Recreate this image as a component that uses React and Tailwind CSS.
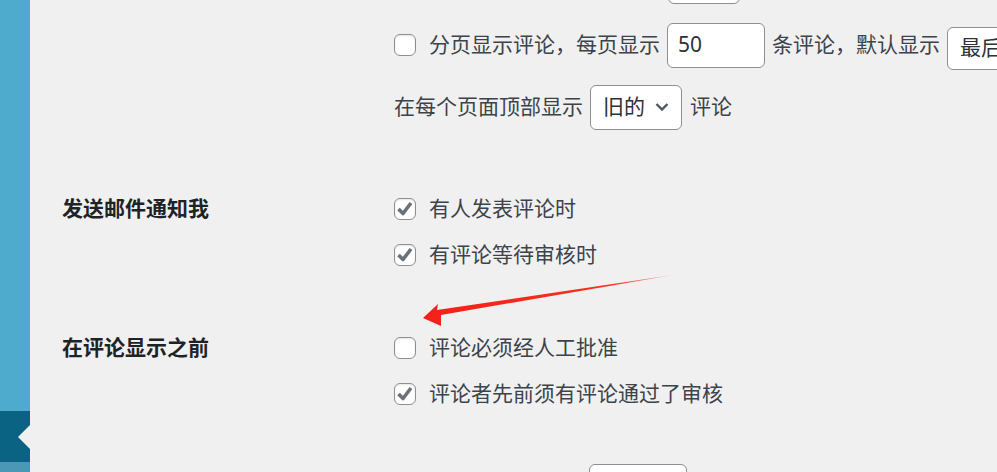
import React from "react";

const font = { fontFamily: '"Noto Sans", "Noto Sans CJK SC", sans-serif' };

const Checkbox = ({ checked }) => (
  <span className="w-[22px] h-[22px] shrink-0 rounded-[6px] border border-[#8c8f94] bg-white flex items-center justify-center shadow-[inset_0_1px_2px_rgba(0,0,0,0.1)]">
    {checked && (
      <svg width="20" height="20" viewBox="0 0 20 20">
        <path d="M3.5 10 L8 14.5 L16 4" fill="none" stroke="#6b7178" strokeWidth="3.6" strokeLinejoin="round" />
      </svg>
    )}
  </span>
);

const Input = ({ value, w }) => (
  <span className={`h-[45px] rounded-[6px] border border-[#8c8f94] bg-white flex items-center px-[10px] text-[#2c3338] ${w}`}>
    {value}
  </span>
);

const CheckRow = ({ checked, label }) => (
  <div className="h-[46px] flex items-center gap-[13px]">
    <Checkbox checked={checked} />
    <span>{label}</span>
  </div>
);

export default function App() {
  return (
    <div className="relative w-[997px] h-[472px] overflow-hidden flex bg-[#f0f0f1] text-[21px] text-[#3c434a]" style={font}>
      {/* admin sidebar edge */}
      <div className="w-[30px] flex flex-col shrink-0">
        <div className="h-[411px] bg-[#4fabce]" />
        <div className="h-[51px] bg-[#0b6384] flex items-center justify-end">
          <span className="w-0 h-0 border-y-[12px] border-y-transparent border-r-[12px] border-r-[#f0f0f1]" />
        </div>
        <div className="flex-1 bg-[#4a97b6]" />
      </div>

      {/* settings table */}
      <div className="flex-1 pl-[32px]">
        <div className="flex">
          <div className="w-[332px] shrink-0" />
          <div className="pl-[274px]">
            <span className="block mt-[-41px] h-[45px] w-[72px] rounded-[6px] border border-[#8c8f94] bg-white" />
          </div>
        </div>

        <div className="flex mt-[10px]">
          <div className="w-[332px] shrink-0" />
          <div className="flex flex-col">
            <div className="h-[62px] flex items-center whitespace-nowrap">
              <Checkbox />
              <span className="ml-[13px]">分页显示评论，每页显示</span>
              <span className="ml-[7px]"><Input value="50" w="w-[98px]" /></span>
              <span className="ml-[7px]">条评论，默认显示</span>
              <span className="ml-[7px] mt-[6px] h-[43px] w-[90px] rounded-[6px] border border-[#8c8f94] bg-white flex items-center px-[12px] text-[#2c3338]">最后</span>
            </div>
            <div className="h-[62px] flex items-center whitespace-nowrap">
              <span>在每个页面顶部显示</span>
              <span className="ml-[7px] h-[45px] w-[92px] rounded-[6px] border border-[#8c8f94] bg-white flex items-center justify-between pl-[12px] pr-[11px] text-[#2c3338]">
                旧的
                <svg width="16" height="16" viewBox="0 0 16 16">
                  <path d="M2.5 5 L8 10.5 L13.5 5" fill="none" stroke="#50575e" strokeWidth="2.4" />
                </svg>
              </span>
              <span className="ml-[8px]">评论</span>
            </div>
          </div>
        </div>

        <div className="flex mt-[48px]">
          <div className="w-[332px] shrink-0 h-[46px] flex items-center font-semibold text-[#1d2327]">发送邮件通知我</div>
          <div className="flex flex-col">
            <CheckRow checked label="有人发表评论时" />
            <CheckRow checked label="有评论等待审核时" />
          </div>
        </div>

        <div className="flex mt-[47px]">
          <div className="w-[332px] shrink-0 h-[46px] flex items-center font-semibold text-[#1d2327]">在评论显示之前</div>
          <div className="flex flex-col">
            <CheckRow label="评论必须经人工批准" />
            <CheckRow checked label="评论者先前须有评论通过了审核" />
          </div>
        </div>

        <div className="flex mt-[47px]">
          <div className="w-[332px] shrink-0" />
          <span className="ml-[195px] h-[45px] w-[98px] rounded-[6px] border border-[#8c8f94] bg-white" />
        </div>
      </div>

      {/* annotation arrow */}
      <svg className="absolute left-0 top-0 pointer-events-none" width="997" height="472">
        <defs>
          <linearGradient id="ar" x1="423" y1="318" x2="673" y2="275" gradientUnits="userSpaceOnUse">
            <stop offset="0" stopColor="#f51f1a" />
            <stop offset="0.75" stopColor="#f5321f" />
            <stop offset="1" stopColor="#f7a0a0" />
          </linearGradient>
        </defs>
        <polygon points="423,318 438,304 437,310 673,275 441,315 441,326" fill="url(#ar)" />
      </svg>
    </div>
  );
}
